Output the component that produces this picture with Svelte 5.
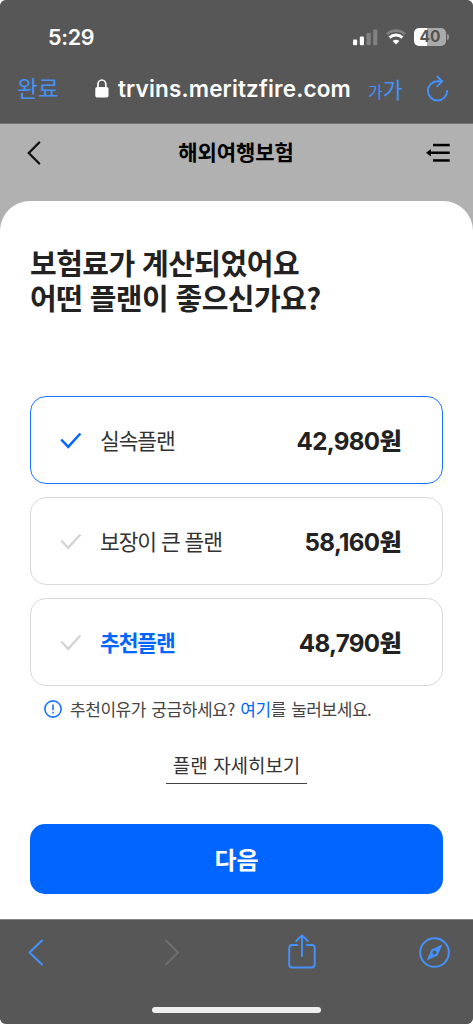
<script lang="ts">
  let selected = $state(0);

  const plans = [
    { name: '실속플랜', price: '42,980' },
    { name: '보장이 큰 플랜', price: '58,160' },
    { name: '추천플랜', price: '48,790', recommended: true },
  ];
</script>

<div class="screen">
  <!-- Browser top bar -->
  <div class="browser-top">
    <div class="status">
      <span class="time">5:29</span>
      <div class="indicators">
        <svg width="25" height="17" viewBox="0 0 25 17" fill="#fff">
          <rect x="0" y="10.5" width="4.2" height="5.7" rx="1.2" />
          <rect x="6.8" y="7.5" width="4.2" height="8.7" rx="1.2" />
          <rect x="13.5" y="4" width="4.2" height="12.2" rx="1.2" opacity=".25" />
          <rect x="20.2" y="0.5" width="4.2" height="15.7" rx="1.2" opacity=".25" />
        </svg>
        <svg width="20" height="16" viewBox="0 0 20 16" fill="none" stroke="#fff">
          <path d="M1 5.2a13 13 0 0 1 18 0" stroke-width="2.6" opacity=".25" />
          <path d="M3.6 8.7a9.2 9.2 0 0 1 12.8 0" stroke-width="3" />
          <path d="M10 15.6l-3.4-3.5a4.9 4.9 0 0 1 6.8 0z" fill="#fff" stroke="none" />
        </svg>
        <div class="battery"><span>40</span></div>
      </div>
    </div>
    <div class="address">
      <button class="done">완료</button>
      <div class="url">
        <svg width="14" height="19" viewBox="0 0 14 19">
          <rect x="0.3" y="8" width="13.2" height="10.5" rx="1.8" fill="#fff" />
          <path d="M3 8.5V5.2a3.9 4.2 0 0 1 7.8 0v3.3" fill="none" stroke="#fff" stroke-width="1.7" />
        </svg>
        <span>trvins.meritzfire.com</span>
      </div>
      <span class="text-size"><small>가</small>가</span>
      <svg class="reload" width="23" height="27" viewBox="0 0 23 27" fill="none" stroke="#4592fa" stroke-width="1.9" stroke-linecap="round" stroke-linejoin="round">
        <path d="M15.8 6.3H11.4a9.6 9.6 0 1 0 9.7 9.6" />
        <path d="M11.3 1.5l4.8 4.8-4.8 4.9" />
      </svg>
    </div>
  </div>

  <header>
    <svg width="14" height="24" viewBox="0 0 14 24" fill="none" stroke="#111" stroke-width="2.3" stroke-linecap="round">
      <path d="M12.2 1.5L1.8 12l10.4 10.5" />
    </svg>
    <h1>해외여행보험</h1>
    <svg width="24" height="20" viewBox="0 0 24 20" fill="#000">
      <rect x="7" y="0.8" width="16.7" height="2.5" />
      <rect x="3" y="8.5" width="20.7" height="2.5" />
      <rect x="7" y="16.2" width="16.7" height="2.5" />
      <path d="M0 9.8l5-3.8v7.6z" />
    </svg>
  </header>

  <main>
    <h2>보험료가 계산되었어요<br />어떤 플랜이 좋으신가요?</h2>

    <div class="plans">
      {#each plans as plan, i}
        <button class="plan" class:selected={selected === i} onclick={() => (selected = i)}>
          <svg width="22" height="17" viewBox="0 0 22 17" fill="none" stroke="currentColor" stroke-width="2.5">
            <path d="M1.2 7.5l7 7.3L20.4 1.5" />
          </svg>
          <span class="name" class:recommended={plan.recommended}>{plan.name}</span>
          <span class="price">{plan.price}<b>원</b></span>
        </button>
      {/each}
    </div>

    <p class="hint">
      <svg width="18" height="18" viewBox="0 0 18 18" fill="none" stroke="#1a73ff" stroke-width="1.6">
        <circle cx="9" cy="9" r="8.1" />
        <path d="M9 4.5v5.8M9 11.8v1.8" />
      </svg>
      <span>추천이유가 궁금하세요? <a href="#reason">여기</a>를 눌러보세요.</span>
    </p>

    <a class="detail" href="#detail">플랜 자세히보기</a>

    <button class="next"><span>다음</span></button>
  </main>

  <!-- Browser bottom bar -->
  <footer>
    <nav>
      <svg width="16" height="27" viewBox="0 0 16 27" fill="none" stroke="#4592fa" stroke-width="2" stroke-linecap="round" stroke-linejoin="round">
        <path d="M14 1.5L1.5 13.5 14 25.5" />
      </svg>
      <svg class="forward" width="16" height="27" viewBox="0 0 16 27" fill="none" stroke="#707070" stroke-width="1.8" stroke-linecap="round" stroke-linejoin="round">
        <path d="M2 1.5l12 12-12 12" />
      </svg>
      <svg class="share" width="28" height="35" viewBox="0 0 28 35" fill="none" stroke="#4592fa" stroke-width="1.9" stroke-linecap="round" stroke-linejoin="round">
        <path d="M9.3 11H4.2A3 3 0 0 0 1.2 14v16.5a3 3 0 0 0 3 3h19.5a3 3 0 0 0 3-3V14a3 3 0 0 0-3-3h-5" />
        <path d="M14 22V1.5M8.3 7L14 1.3 19.7 7" />
      </svg>
      <svg class="compass" width="31" height="31" viewBox="0 0 31 31">
        <circle cx="15.5" cy="15.5" r="14.3" fill="none" stroke="#4592fa" stroke-width="2" />
        <path fill="#4592fa" fill-rule="evenodd" d="M23.4 7.6l-4.8 11-11 4.8 4.8-11zM15.5 13.5a2 2 0 1 0 0 4 2 2 0 0 0 0-4z" />
      </svg>
    </nav>
    <div class="home"></div>
  </footer>
</div>

<style>
  :global(body) {
    background: #fff;
  }

  .screen {
    height: 1024px;
    display: flex;
    flex-direction: column;
    overflow: hidden;
    border-radius: 6px;
    background: #b1b1b1;
    color: #222;
    font-family: 'Noto Sans CJK KR', sans-serif;
  }

  button {
    border: none;
    background: none;
    padding: 0;
    font: inherit;
    cursor: pointer;
  }
  a { text-decoration: none; }
  svg {
    display: block;
    flex: none;
  }

  /* Browser top bar */
  .browser-top {
    box-sizing: border-box;
    height: 124px;
    background: #575757;
    border-bottom: 1px solid #747474;
    color: #fff;
    font-family: Inter, 'Noto Sans CJK KR', sans-serif;
  }
  .status {
    display: flex;
    align-items: center;
    justify-content: space-between;
    height: 26px;
    padding: 24px 24px 0 48px;
  }
  .time {
    font-size: 21.5px;
    font-weight: 600;
    letter-spacing: -0.3px;
  }
  .indicators {
    display: flex;
    align-items: center;
    gap: 8px;
  }
  .battery {
    position: relative;
    width: 32px;
    height: 18px;
    margin-right: 3px;
    border-radius: 5px;
    background: linear-gradient(90deg, #fff 40%, #aaa 40%);
    color: #555;
    font-size: 15.5px;
    font-weight: 700;
    line-height: 18px;
    text-align: center;
  }
  .battery::after {
    content: '';
    position: absolute;
    top: 6px;
    right: -3px;
    width: 2px;
    height: 6px;
    border-radius: 0 2px 2px 0;
    background: #999;
  }
  .address {
    display: flex;
    align-items: center;
    height: 76px;
    padding: 0 24px 0 17px;
  }
  .done {
    width: 42px;
    margin-bottom: 3px;
    color: #4592fa;
    font-family: 'Noto Sans CJK KR', sans-serif;
    font-size: 22.5px;
    white-space: nowrap;
  }
  .url {
    display: flex;
    align-items: center;
    gap: 9px;
    margin-left: 36px;
    width: 256px;
    font-size: 22.5px;
    font-weight: 600;
    letter-spacing: 0.16px;
    white-space: nowrap;
  }
  .text-size {
    margin-left: 17px;
    width: 36px;
    color: #4592fa;
    font-size: 21.5px;
    white-space: nowrap;
  }
  .text-size small { font-size: 16px; }
  .reload { margin-left: auto; }

  header {
    display: flex;
    align-items: center;
    justify-content: space-between;
    height: 57px;
    padding: 0 23px 20px 27px;
  }
  h1 {
    margin: 0 0 3px 5px;
    color: #000;
    font-size: 21px;
    font-weight: 700;
    letter-spacing: -0.1px;
  }

  /* Sheet */
  main {
    box-sizing: border-box;
    display: flex;
    flex-direction: column;
    height: 718px;
    padding: 44px 30px 0;
    border-radius: 30px 30px 0 0;
    background: #fff;
  }
  h2 {
    margin: 0;
    font-size: 29px;
    font-weight: 700;
    line-height: 35px;
    letter-spacing: -0.5px;
    word-spacing: 1.2px;
  }
  .plans {
    display: flex;
    flex-direction: column;
    gap: 13px;
    margin-top: 81px;
  }
  .plan {
    box-sizing: border-box;
    display: flex;
    align-items: center;
    height: 88px;
    padding: 0 41px 0 29px;
    border: 1px solid #d9d9d9;
    border-radius: 16px;
    color: #d5d5d5;
  }
  .plan.selected {
    border-color: #1a73ff;
    color: #0066ff;
  }
  .name {
    margin: 0 0 1px 18px;
    color: #333;
    font-size: 21.5px;
    letter-spacing: -1.1px;
    word-spacing: 1.2px;
  }
  .name.recommended {
    color: #0066ff;
    font-weight: 700;
  }
  .price {
    margin: 0 0 1px auto;
    color: #222;
    font-family: Inter, 'Noto Sans CJK KR', sans-serif;
    font-size: 24.2px;
    font-weight: 700;
    letter-spacing: -0.7px;
  }

  .hint {
    display: flex;
    align-items: center;
    gap: 8px;
    height: 24px;
    margin: 11px 0 0 14px;
    color: #444;
    font-size: 17px;
    letter-spacing: -0.45px;
    word-spacing: 2px;
  }
  .hint span { margin-bottom: 1px; }
  .hint a { color: #0066ff; }

  .detail {
    align-self: center;
    height: 35px;
    margin-top: 27px;
    padding: 0 6.5px;
    border-bottom: 1px solid #444;
    color: #333;
    font-size: 19px;
    line-height: 33px;
    letter-spacing: -0.1px;
    word-spacing: 1.5px;
  }
  .next {
    height: 70px;
    margin-top: 40px;
    padding-bottom: 2px;
    border-radius: 15px;
    background: #0066ff;
    color: #fff;
    font-size: 24px;
    font-weight: 700;
  }

  /* Browser bottom bar */
  footer {
    box-sizing: border-box;
    height: 105px;
    background: #575757;
    border-top: 1px solid #858585;
  }
  nav {
    display: flex;
    align-items: center;
    height: 65px;
    padding: 0 23px 0 28px;
  }
  .forward { margin-left: 120px; }
  .share { margin: 0 0 2px 108px; }
  .compass { margin-left: auto; }
  .home {
    width: 169px;
    height: 6px;
    margin: 22px auto 0;
    border-radius: 3px;
    background: #eee;
  }
</style>
